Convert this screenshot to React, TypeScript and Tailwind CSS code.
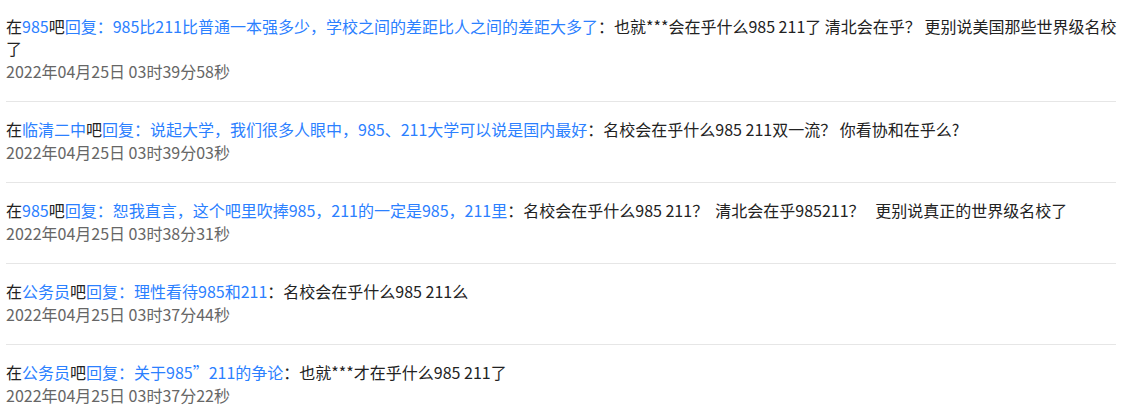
import React from 'react';

interface Reply {
  forum: string;
  title: string;
  content: string;
  time: string;
}

const replies: Reply[] = [
  {
    forum: '985',
    title: '985比211比普通一本强多少，学校之间的差距比人之间的差距大多了',
    content: '也就***会在乎什么985 211了 清北会在乎？ 更别说美国那些世界级名校了',
    time: '2022年04月25日 03时39分58秒',
  },
  {
    forum: '临清二中',
    title: '说起大学，我们很多人眼中，985、211大学可以说是国内最好',
    content: '名校会在乎什么985 211双一流？ 你看协和在乎么?',
    time: '2022年04月25日 03时39分03秒',
  },
  {
    forum: '985',
    title: '恕我直言，这个吧里吹捧985，211的一定是985，211里',
    content: '名校会在乎什么985 211？  清北会在乎985211？   更别说真正的世界级名校了',
    time: '2022年04月25日 03时38分31秒',
  },
  {
    forum: '公务员',
    title: '理性看待985和211',
    content: '名校会在乎什么985 211么',
    time: '2022年04月25日 03时37分44秒',
  },
  {
    forum: '公务员',
    title: '关于985”211的争论',
    content: '也就***才在乎什么985 211了',
    time: '2022年04月25日 03时37分22秒',
  },
];

function ReplyItem({ item }: { item: Reply }) {
  return (
    <li className="border-b border-[#e6e6e6] pt-4 pb-[19px]">
      <div className="-mr-1 whitespace-pre-wrap text-[16px] leading-[22px] text-[#222]">
        在<span className="text-[#2b80ff]">{item.forum}</span>吧
        <span className="text-[#2b80ff]">回复：{item.title}</span>：{item.content}
      </div>
      <div className="mt-px text-[16px] leading-[22px] text-[#666]">{item.time}</div>
    </li>
  );
}

export default function App() {
  return (
    <div
      className="h-[420px] w-[1136px] overflow-hidden bg-white pl-[6px]"
      style={{ fontFamily: '"Noto Sans CJK SC", "Noto Sans", sans-serif' }}
    >
      <ul className="-mt-px w-[1110px]">
        {replies.map((r, i) => (
          <ReplyItem key={i} item={r} />
        ))}
      </ul>
    </div>
  );
}
